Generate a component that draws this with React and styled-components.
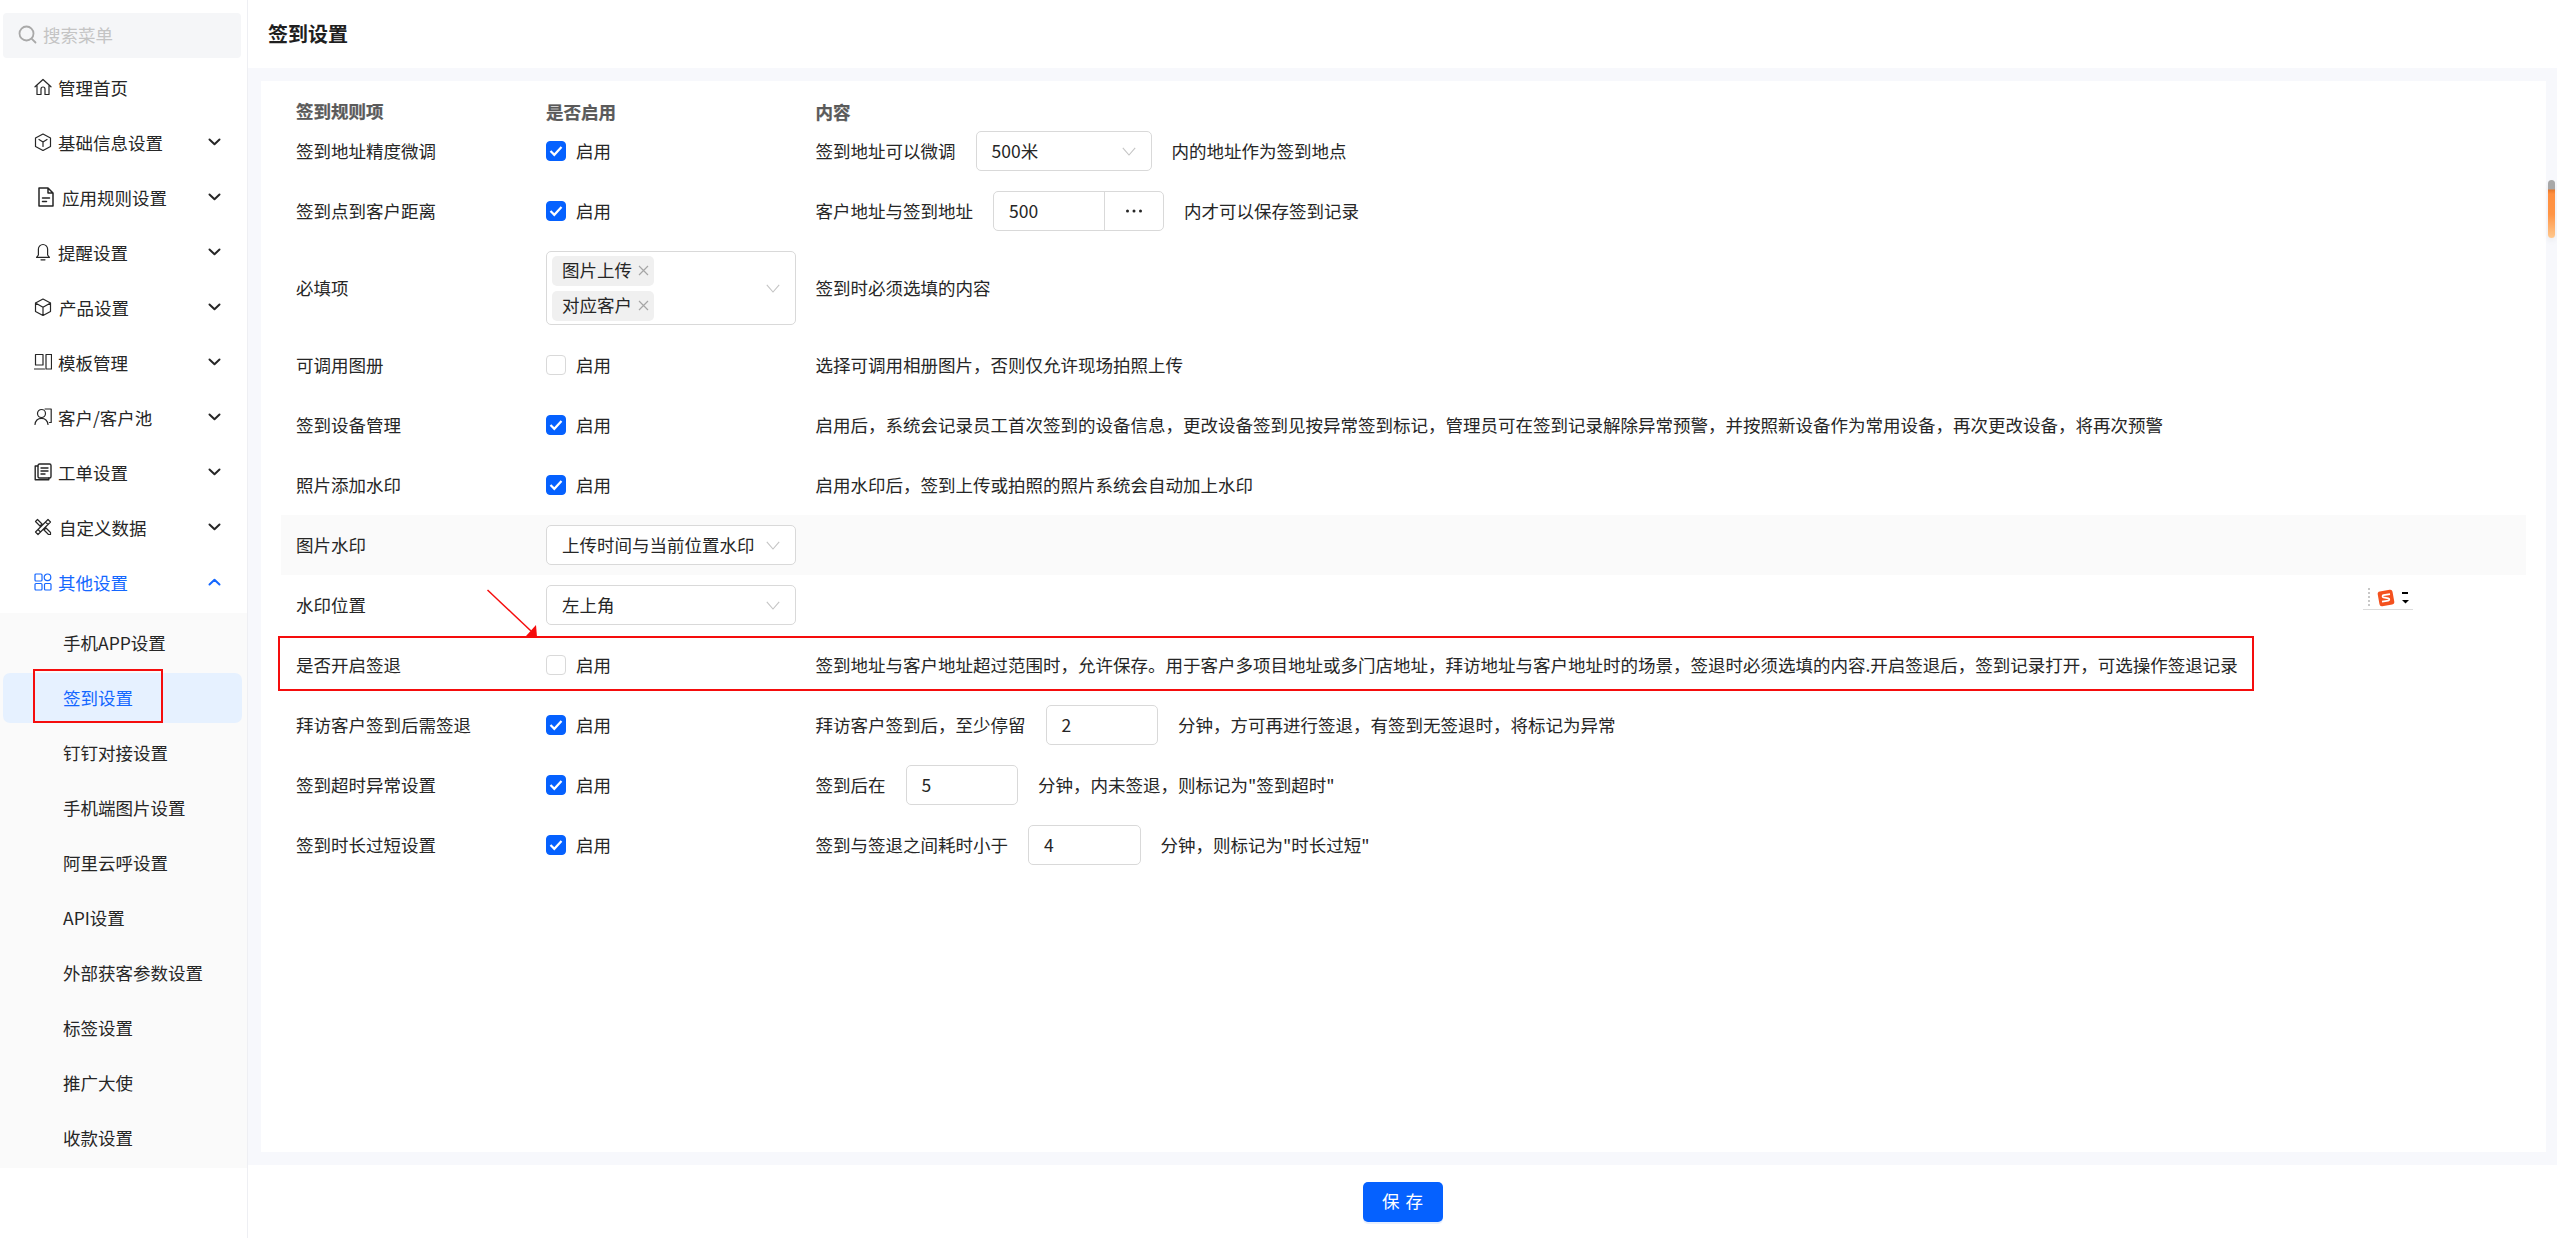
import React from 'react'
import styled, { createGlobalStyle } from 'styled-components';

const GlobalStyle = createGlobalStyle`
html, body {
    margin: 0;
    padding: 0;
    background: #fff;
}
* {
    box-sizing: border-box;
}
body {
    font-family: "Noto Sans CJK SC", "Noto Sans", sans-serif;
    font-size: 17.5px;
    color: #262626;
}
`;

const Layout = styled.div`
display: flex;
width: 100%;
height: 100vh;
overflow: hidden;
`;

const Sidebar = styled.aside`
flex: 0 0 248px;
padding-top: 13px;
background: #fff;
border-right: 1px solid #eeeff3;
`;

const Search = styled.div`
display: flex;
align-items: center;
gap: 6px;
width: 238px;
height: 45px;
margin: 0 0 5px 3px;
padding: 0 0 2px 15px;
border-radius: 4px;
background: #f5f6f8;
color: #c4c4c4;
svg {
    color: #a9a9a9;
}
`;

const MenuItem = styled.div`
display: flex;
align-items: center;
height: 50px;
margin-bottom: 5px;
padding: 0 0 2px 34px;
color: ${(p) => (p.$active ? '#1467ff' : '#262626')};
`;

const MenuIcon = styled.span`
display: flex;
flex: 0 0 auto;
width: 18px;
height: 18px;
align-items: center;
margin: 0 ${(p) => p.$after || 6}px 0 ${(p) => p.$before || 0}px;
`;

const Caret = styled.span`
display: flex;
margin-left: auto;
margin-right: 26px;
`;

const SubMenu = styled.div`
padding: 5px 0;
background: #fafafa;
`;

const SubItem = styled.div`
position: relative;
display: flex;
align-items: center;
width: 239px;
height: 50px;
margin: 0 0 5px 3px;
padding: 0 0 2px 60px;
border-radius: 7px;
background: ${(p) => (p.$active ? '#e6f1ff' : 'transparent')};
color: ${(p) => (p.$active ? '#1467ff' : '#262626')};
&:last-child {
    margin-bottom: 0;
}
`;

const MenuMark = styled.div`
position: absolute;
left: 30px;
top: -4px;
width: 130px;
height: 54px;
border: 2px solid #f50d0d;
`;

const Main = styled.main`
display: flex;
flex: 1;
flex-direction: column;
min-width: 0;
`;

const TopBar = styled.header`
display: flex;
align-items: center;
flex: 0 0 68px;
padding: 0 0 2px 20px;
background: #fff;
font-size: 20px;
font-weight: 700;
color: #1f1f1f;
`;

const Body = styled.div`
position: relative;
flex: 1;
min-height: 0;
padding: 13px 11px 13px 13px;
background: #f7f8fc;
`;

const Card = styled.section`
height: 100%;
padding: 0 20px;
background: #fff;
`;

const Row = styled.div`
position: relative;
display: grid;
grid-template-columns: 265px 269.5px 1fr;
align-items: center;
height: ${(p) => p.$height || 60}px;
background: ${(p) => (p.$shaded ? '#fafafa' : 'transparent')};
`;

const HeadRow = styled(Row)`
height: 40px;
padding-top: 20px;
font-weight: 700;
color: #5a5a5a;
line-height: 20px;
-webkit-text-stroke: 0.25px #5a5a5a;
`;

const Label = styled.div`
padding: 0 0 2px 15px;
`;

const Text = styled.span`
padding-bottom: 2px;
`;

const Toggle = styled.label`
display: flex;
align-items: center;
gap: 10px;
`;

const Check = styled.span`
display: flex;
align-items: center;
justify-content: center;
width: 20px;
height: 20px;
border-radius: 4px;
border: 1px solid ${(p) => (p.$on ? '#0561ff' : '#d9d9d9')};
background: ${(p) => (p.$on ? '#0561ff' : '#fff')};
`;

const Content = styled.div`
display: flex;
align-items: center;
gap: 20px;
white-space: nowrap;
`;

const SelectBox = styled.div`
display: flex;
align-items: center;
justify-content: space-between;
width: ${(p) => p.$width}px;
height: 40px;
padding: 0 15px;
border: 1px solid #d9d9d9;
border-radius: 5px;
background: #fff;
white-space: nowrap;
`;

const MultiBox = styled(SelectBox)`
height: 74px;
padding: 3px 15px 3px 5px;
`;

const TagList = styled.div`
display: flex;
flex-direction: column;
align-items: flex-start;
gap: 5px;
`;

const Tag = styled.span`
display: flex;
align-items: center;
gap: 6px;
height: 30px;
padding: 0 5px 0 10px;
border-radius: 5px;
background: #f0f0f0;
svg {
    color: #a6a6a6;
}
`;

const NumberBox = styled.div`
display: flex;
align-items: center;
width: ${(p) => p.$width || 112.5}px;
height: 40px;
padding-left: 15px;
border: 1px solid #d9d9d9;
border-radius: 5px;
background: #fff;
`;

const AddonGroup = styled.div`
display: flex;
width: 171px;
height: 40px;
border: 1px solid #d9d9d9;
border-radius: 5px;
`;

const AddonValue = styled.div`
display: flex;
align-items: center;
width: 111px;
padding-left: 15px;
border-right: 1px solid #d9d9d9;
`;

const AddonButton = styled.div`
display: flex;
flex: 1;
align-items: center;
justify-content: center;
`;

const Highlight = styled.div`
position: absolute;
left: -3px;
top: 1px;
width: 1976px;
height: 55px;
border: 2px solid #f50d0d;
`;

const Arrow = styled.svg`
position: absolute;
left: 200px;
top: -50px;
`;

const ScrollThumb = styled.div`
position: absolute;
right: 2px;
top: 112px;
width: 7px;
height: 58px;
border-radius: 4px;
background: linear-gradient(#a8a8a8 0, #a8a8a8 9px, #e8792c 10px, #ff8f3f 14px, #ff9445 34px, #ffc88e 100%);
box-shadow: 0 3px 6px rgba(0, 0, 0, 0.06);
`;

const ImeWidget = styled.div`
position: absolute;
left: 2115px;
top: 519px;
display: flex;
align-items: center;
gap: 7px;
width: 50px;
height: 23px;
padding-left: 5px;
border-bottom: 1px solid #dcdcdc;
`;

const ImeGrip = styled.span`
width: 2px;
height: 20px;
background: repeating-linear-gradient(#c8c8c8 0, #c8c8c8 2px, transparent 2px, transparent 4px);
`;

const Footer = styled.footer`
display: flex;
align-items: center;
justify-content: center;
flex: 0 0 73px;
background: #fff;
`;

const SaveButton = styled.button`
width: 80px;
height: 40px;
padding: 0 0 2px;
border: 0;
border-radius: 5px;
background: #0561ff;
color: #fff;
font-family: inherit;
font-size: 17.5px;
word-spacing: 2px;
box-shadow: 0 2px 0 rgba(5, 97, 255, 0.1);
`;

const Line = ({ children, width = 18, height = 18 }) => (
    <svg width={width} height={height} viewBox={`0 0 ${width} ${height}`} fill="none" stroke="currentColor" strokeWidth="1.2" strokeLinejoin="round" strokeLinecap="round">
        {children}
    </svg>
);

const HomeIcon = () => (
    <Line><path d="M1 8.800 9 1.500l8 7.300M3 7.500V16.500h4V11a2 2 0 0 1 4 0v5.500h4V7.500" /></Line>
);
const HexIcon = () => (
    <Line><path d="M9 1 16.500 5v8.500L9 17.500 1.500 13.500V5zM5 6.500 9 9l4-2.500M9 9v4.500" /></Line>
);
const CubeIcon = () => (
    <Line><path d="M9 1 16.500 5v8.500L9 17.500 1.500 13.500V5zM1.500 5 9 9.200 16.500 5M9 9.200v8.300" /></Line>
);
const DocIcon = () => (
    <Line width={16} height={20}><path d="M1 1h9l5 5v13H1zM10 1v5h5M4.500 11h7M4.500 14.500h4" strokeWidth="1.500" /></Line>
);
const BellIcon = () => (
    <Line><path d="M9 1.500a4.600 4.600 0 0 0-4.600 4.600V12L2.600 14.400h12.800L13.600 12V6.100A4.600 4.600 0 0 0 9 1.500zM7 16.800h4" /></Line>
);
const TemplateIcon = () => (
    <Line><path d="M1.500 1.500h7.500v10.500H1.500zM.5 16h10M12 1.500h5.500V16H12z" /></Line>
);
const CustomerIcon = () => (
    <Line><circle cx="7.500" cy="5.500" r="4" /><path d="M1 16.500c.4-3.800 3-6.200 6.500-6.200s6 2.400 6.500 6.200M11 1h6.200v13.500h-1.700" /></Line>
);
const OrderIcon = () => (
    <Line><rect x="4" y="1" width="13" height="14" rx="1.500" strokeWidth="1.400" /><path d="M7 5h7M7 8h7M7 11h4M3.800 3H1.200v13.800h13.600V15" strokeWidth="1.400" /></Line>
);
const ToolIcon = () => (
    <Line><path d="M1.500 3.500 3.500 1.500 8 6 6 8zM10 12l2-2 4.500 4.500v2h-2zM14 1.500 16.500 4 4 16.500 1.500 14zM11.500 4l2.500 2.500M4 11.500 6.500 14" /></Line>
);
const GridIcon = () => (
    <Line><rect x="1" y="1" width="7" height="7" rx="1" /><circle cx="13.500" cy="4.300" r="3.300" /><rect x="1" y="10.500" width="7" height="6.500" rx="1" /><rect x="10.500" y="10.500" width="6.500" height="6.500" rx="1" /></Line>
);
const SearchIcon = () => (
    <svg width="19" height="19" viewBox="0 0 19 19" fill="none" stroke="currentColor" strokeWidth="1.800" strokeLinecap="round"><circle cx="8.500" cy="8.500" r="7" /><path d="m13.800 13.800 3.700 3.700" /></svg>
);
const MenuCaret = ({ up }) => (
    <svg width="13" height="8" viewBox="0 0 13 8" fill="none" stroke="currentColor" strokeWidth="2" strokeLinecap="round" strokeLinejoin="round"><path d={up ? 'M1.500 6.500 6.500 1.800l5 4.700' : 'M1.500 1.500 6.500 6.200l5-4.700'} /></svg>
);
const SelectArrow = () => (
    <svg width="14" height="9" viewBox="0 0 14 9" fill="none" stroke="#c4c4c4" strokeWidth="1.100"><path d="M.8.800 7 8l6.200-7.200" /></svg>
);
const TagClose = () => (
    <svg width="11" height="11" viewBox="0 0 11 11" fill="none" stroke="currentColor" strokeWidth="1.200"><path d="m1 1 9 9M10 1l-9 9" /></svg>
);
const Tick = () => (
    <svg width="14" height="12" viewBox="0 0 14 12" fill="none" stroke="#fff" strokeWidth="2.200"><path d="M1.500 6 5.300 9.800 12.500 2" /></svg>
);
const Dots = () => (
    <svg width="18" height="4" viewBox="0 0 18 4" fill="#262626"><circle cx="2.500" cy="2" r="1.500" /><circle cx="9" cy="2" r="1.500" /><circle cx="15.500" cy="2" r="1.500" /></svg>
);
const SogouLogo = () => (
    <svg width="18" height="18" viewBox="0 0 18 18">
        <rect x="1.500" y="1.500" width="15" height="15" rx="2.500" fill="#f4511e" transform="rotate(-10 9 9)" />
        <path d="M13 5.200 6.500 6.100c-1.200.2-1.300 2-.1 2.300l5 .9c1.300.3 1.200 2.200-.1 2.400l-6.300.9" fill="none" stroke="#fff" strokeWidth="1.700" />
    </svg>
);

const menus = [
    { name: '管理首页', icon: <HomeIcon /> },
    { name: '基础信息设置', icon: <HexIcon />, caret: true },
    { name: '应用规则设置', icon: <DocIcon />, caret: true, before: 4, after: 6 },
    { name: '提醒设置', icon: <BellIcon />, caret: true },
    { name: '产品设置', icon: <CubeIcon />, caret: true, after: 7 },
    { name: '模板管理', icon: <TemplateIcon />, caret: true },
    { name: '客户/客户池', icon: <CustomerIcon />, caret: true },
    { name: '工单设置', icon: <OrderIcon />, caret: true },
    { name: '自定义数据', icon: <ToolIcon />, caret: true, after: 7 },
];

const subMenus = ['手机APP设置', '签到设置', '钉钉对接设置', '手机端图片设置', '阿里云呼设置', 'API设置', '外部获客参数设置', '标签设置', '推广大使', '收款设置'];

function Enable({ on }) {
    return (
        <Toggle>
            <Check $on={on}>{on && <Tick />}</Check>
            <Text>启用</Text>
        </Toggle>
    );
}

function Select({ width, value }) {
    return (
        <SelectBox $width={width}>
            <Text>{value}</Text>
            <SelectArrow />
        </SelectBox>
    );
}

function Nav() {
    return (
        <Sidebar>
            <Search><SearchIcon />搜索菜单</Search>
            {menus.map((m) => (
                <MenuItem key={m.name}>
                    <MenuIcon $before={m.before} $after={m.after}>{m.icon}</MenuIcon>
                    {m.name}
                    {m.caret && <Caret><MenuCaret /></Caret>}
                </MenuItem>
            ))}
            <MenuItem $active>
                <MenuIcon><GridIcon /></MenuIcon>
                其他设置
                <Caret><MenuCaret up /></Caret>
            </MenuItem>
            <SubMenu>
                {subMenus.map((name) => (
                    <SubItem key={name} $active={name === '签到设置'}>
                        {name}
                        {name === '签到设置' && <MenuMark />}
                    </SubItem>
                ))}
            </SubMenu>
        </Sidebar>
    );
}

function App() {
    return (
        <Layout>
            <GlobalStyle />
            <Nav />
            <Main>
                <TopBar>签到设置</TopBar>
                <Body>
                    <Card>
                        <HeadRow>
                            <Label>签到规则项</Label>
                            <div>是否启用</div>
                            <div>内容</div>
                        </HeadRow>
                        <Row>
                            <Label>签到地址精度微调</Label>
                            <Enable on />
                            <Content>
                                <Text>签到地址可以微调</Text>
                                <Select width={176} value="500米" />
                                <Text>内的地址作为签到地点</Text>
                            </Content>
                        </Row>
                        <Row>
                            <Label>签到点到客户距离</Label>
                            <Enable on />
                            <Content>
                                <Text>客户地址与签到地址</Text>
                                <AddonGroup>
                                    <AddonValue><Text>500</Text></AddonValue>
                                    <AddonButton><Dots /></AddonButton>
                                </AddonGroup>
                                <Text>内才可以保存签到记录</Text>
                            </Content>
                        </Row>
                        <Row $height={94}>
                            <Label>必填项</Label>
                            <MultiBox $width={250}>
                                <TagList>
                                    <Tag><Text>图片上传</Text><TagClose /></Tag>
                                    <Tag><Text>对应客户</Text><TagClose /></Tag>
                                </TagList>
                                <SelectArrow />
                            </MultiBox>
                            <Content><Text>签到时必须选填的内容</Text></Content>
                        </Row>
                        <Row>
                            <Label>可调用图册</Label>
                            <Enable />
                            <Content><Text>选择可调用相册图片，否则仅允许现场拍照上传</Text></Content>
                        </Row>
                        <Row>
                            <Label>签到设备管理</Label>
                            <Enable on />
                            <Content><Text>启用后，系统会记录员工首次签到的设备信息，更改设备签到见按异常签到标记，管理员可在签到记录解除异常预警，并按照新设备作为常用设备，再次更改设备，将再次预警</Text></Content>
                        </Row>
                        <Row>
                            <Label>照片添加水印</Label>
                            <Enable on />
                            <Content><Text>启用水印后，签到上传或拍照的照片系统会自动加上水印</Text></Content>
                        </Row>
                        <Row $shaded>
                            <Label>图片水印</Label>
                            <Select width={250} value="上传时间与当前位置水印" />
                        </Row>
                        <Row>
                            <Label>水印位置</Label>
                            <Select width={250} value="左上角" />
                        </Row>
                        <Row>
                            <Label>是否开启签退</Label>
                            <Enable />
                            <Content><Text>签到地址与客户地址超过范围时，允许保存。用于客户多项目地址或多门店地址，拜访地址与客户地址时的场景，签退时必须选填的内容.开启签退后，签到记录打开，可选操作签退记录</Text></Content>
                            <Highlight />
                            <Arrow width="60" height="55" viewBox="0 0 60 55">
                                <path d="M6.500 5 50 46" stroke="#f50d0d" strokeWidth="1.500" fill="none" />
                                <path d="M56 52 45 51 55 40z" fill="#f50d0d" />
                            </Arrow>
                        </Row>
                        <Row>
                            <Label>拜访客户签到后需签退</Label>
                            <Enable on />
                            <Content>
                                <Text>拜访客户签到后，至少停留</Text>
                                <NumberBox><Text>2</Text></NumberBox>
                                <Text>分钟，方可再进行签退，有签到无签退时，将标记为异常</Text>
                            </Content>
                        </Row>
                        <Row>
                            <Label>签到超时异常设置</Label>
                            <Enable on />
                            <Content>
                                <Text>签到后在</Text>
                                <NumberBox><Text>5</Text></NumberBox>
                                <Text>分钟，内未签退，则标记为"签到超时"</Text>
                            </Content>
                        </Row>
                        <Row>
                            <Label>签到时长过短设置</Label>
                            <Enable on />
                            <Content>
                                <Text>签到与签退之间耗时小于</Text>
                                <NumberBox><Text>4</Text></NumberBox>
                                <Text>分钟，则标记为"时长过短"</Text>
                            </Content>
                        </Row>
                    </Card>
                    <ScrollThumb />
                    <ImeWidget>
                        <ImeGrip />
                        <SogouLogo />
                        <svg width="7" height="12" viewBox="0 0 7 12" fill="#000"><rect x="0" y="0" width="6" height="2" /><path d="M0 8h7l-3.500 3.500z" /></svg>
                    </ImeWidget>
                </Body>
                <Footer>
                    <SaveButton>保 存</SaveButton>
                </Footer>
            </Main>
        </Layout>
    );
}

export default App;
